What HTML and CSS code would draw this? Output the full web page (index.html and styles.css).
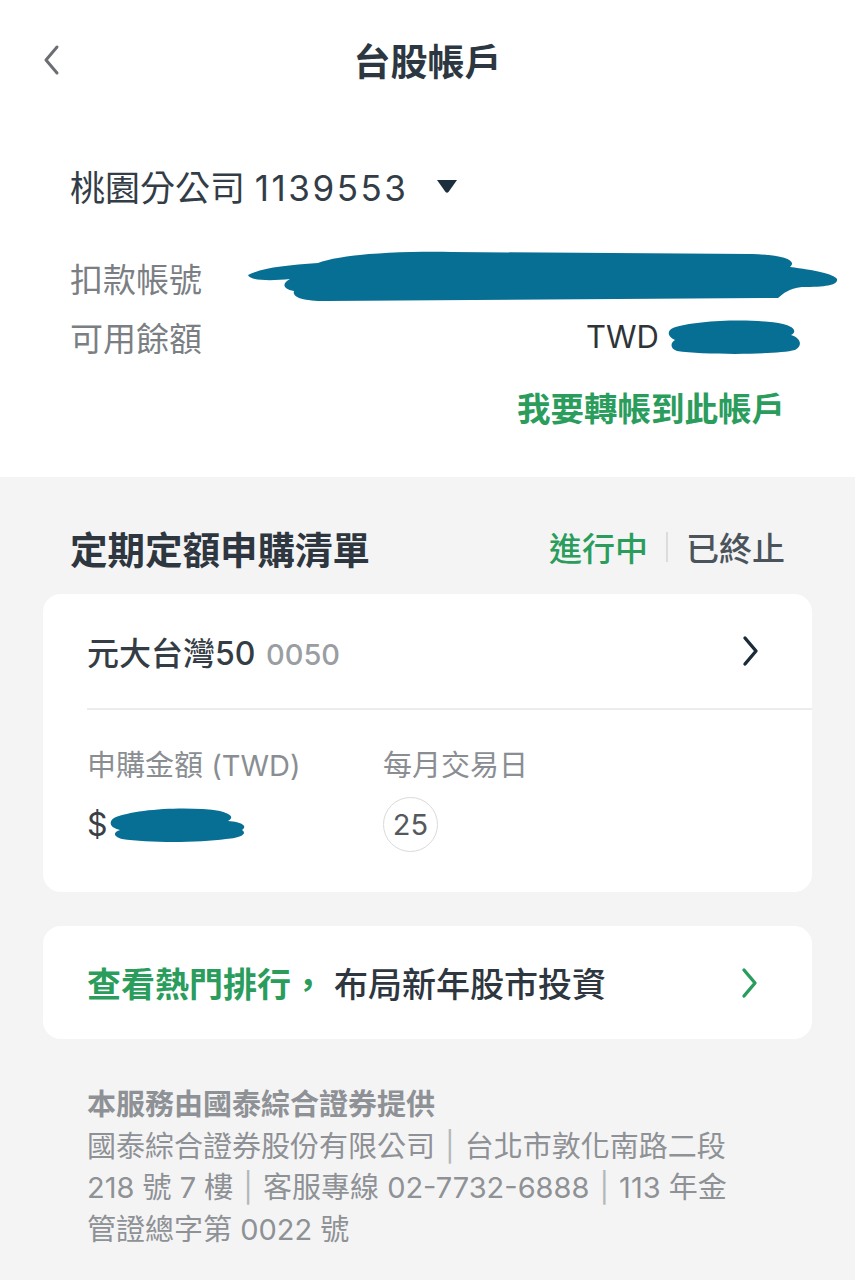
FILE: index.html
```html
<!DOCTYPE html>
<html lang="zh-Hant">
<head>
    <meta charset="UTF-8">
    <meta name="viewport" content="width=device-width, initial-scale=1.0">
    <title>台股帳戶</title>
    <link rel="stylesheet" href="styles.css">
</head>
<body>
    <header class="topbar">
        <a class="back" href="#" aria-label="返回">
            <svg width="20" height="32" viewBox="0 0 20 32"><path d="M15 3 L4 16 L15 29" fill="none" stroke="#6b6e72" stroke-width="3" stroke-linecap="round" stroke-linejoin="round"/></svg>
        </a>
        <h1>台股帳戶</h1>
    </header>

    <section class="account">
        <div class="branch">
            <span>桃園分公司 <span class="branch-no">1139553</span></span>
            <svg class="caret" width="22" height="14" viewBox="0 0 22 14"><path d="M1 1 H21 L12.5 13 Q11 14.5 9.5 13 Z" fill="#1c2f3f"/></svg>
        </div>

        <div class="info-row">
            <span class="label">扣款帳號</span>
            <!-- redaction mark -->
            <svg class="mark mark-account" width="596" height="54" viewBox="0 0 596 54"><path d="M6 27 C20 20 44 17 76 15 C96 7 150 3 210 4 L510 6 C540 7 556 12 548 19 C572 22 592 26 595 31 C596 37 584 39 560 39 C546 41 542 45 536 50 L84 53 C60 53 50 49 52 43 C40 41 40 35 48 31 C30 33 8 33 6 27 Z" fill="#076f93"/></svg>
        </div>
        <div class="info-row">
            <span class="label">可用餘額</span>
            <span class="value">TWD <svg class="mark mark-balance" width="137" height="37" viewBox="0 0 137 37"><path d="M8 10 C30 2 90 0 118 6 C130 9 132 14 126 17 C136 20 138 28 130 32 C110 37 40 37 12 33 C4 30 6 24 10 22 C2 18 2 13 8 10 Z" fill="#076f93"/></svg></span>
        </div>

        <a class="transfer" href="#">我要轉帳到此帳戶</a>
    </section>

    <main class="content">
        <div class="list-head">
            <h2>定期定額申購清單</h2>
            <div class="tabs">
                <span class="tab active">進行中</span>
                <span class="tab-sep"></span>
                <span class="tab">已終止</span>
            </div>
        </div>

        <div class="card">
            <div class="card-row">
                <div class="fund">元大台灣50 <span class="code">0050</span></div>
                <svg width="20" height="32" viewBox="0 0 20 32"><path d="M5 3 L16 16 L5 29" fill="none" stroke="#1b2b3a" stroke-width="3.4" stroke-linecap="round" stroke-linejoin="round"/></svg>
            </div>
            <div class="card-detail">
                <div class="detail-col amount">
                    <div class="label">申購金額 (TWD)</div>
                    <div class="detail-value">$<svg class="mark" width="140" height="37" viewBox="0 0 140 37"><path d="M6 12 C26 3 80 0 112 5 C124 8 126 12 120 15 C134 16 140 20 134 24 C140 28 132 32 118 33 C90 37 40 37 14 33 C4 30 6 26 12 24 C2 22 0 16 6 12 Z" fill="#076f93"/></svg></div>
                </div>
                <div class="detail-col">
                    <div class="label">每月交易日</div>
                    <div class="detail-value"><span class="day">25</span></div>
                </div>
            </div>
        </div>

        <a class="card promo" href="#">
            <span><span class="promo-em">查看熱門排行，</span> 布局新年股市投資</span>
            <svg width="20" height="32" viewBox="0 0 20 32"><path d="M5 3 L16 16 L5 29" fill="none" stroke="#2a9d5c" stroke-width="3.4" stroke-linecap="round" stroke-linejoin="round"/></svg>
        </a>

        <footer class="note">
            <div class="note-title">本服務由國泰綜合證券提供</div>
            <p>國泰綜合證券股份有限公司<span class="bar">|</span>台北市敦化南路二段 218 號 7 樓<span class="bar">|</span>客服專線 02-7732-6888<span class="bar">|</span>113 年金管證總字第 0022 號</p>
        </footer>
    </main>
</body>
</html>
```

FILE: styles.css
```css
body {
    margin: 0;
    padding: 0;
    font-family: Inter, "Noto Sans CJK TC", sans-serif;
    background-color: #f4f4f4;
    color: #2e3842;
}
a {
    text-decoration: none;
}
.topbar {
    height: 120px;
    display: flex;
    align-items: center;
    justify-content: center;
    position: relative;
    background: white;
}
.topbar h1 {
    margin: 0;
    font-size: 37px;
    font-weight: 700;
    color: #2d3741;
}
.back {
    position: absolute;
    left: 42px;
    top: 44px;
    display: flex;
}
.account {
    background: white;
    padding: 40px 70px 43px;
}
.branch {
    display: flex;
    align-items: center;
    gap: 28px;
    height: 50px;
    font-size: 35px;
    color: #333d47;
}
.branch-no {
    letter-spacing: 2.5px;
}
.caret {
    margin-top: 2px;
}
.info-row {
    position: relative;
    display: flex;
    justify-content: space-between;
    align-items: center;
    height: 59px;
    font-size: 33px;
}
.branch + .info-row {
    margin-top: 38px;
}
.label {
    color: #7b7f84;
}
.value {
    display: flex;
    align-items: center;
    gap: 6px;
    font-size: 31px;
    color: #2e3438;
    margin-right: -17px;
}
.mark-account {
    position: absolute;
    left: 172px;
    top: 0;
}
.transfer {
    display: block;
    text-align: right;
    margin-top: 18px;
    line-height: 50px;
    font-size: 33.5px;
    font-weight: 700;
    color: #2a9d5c;
}
.content {
    padding: 45px 43px 40px;
}
.list-head {
    display: flex;
    justify-content: space-between;
    align-items: center;
    height: 50px;
    padding: 0 27px;
}
.list-head h2 {
    margin: 0;
    font-size: 37.5px;
    font-weight: 700;
    color: #2e3640;
}
.tabs {
    display: flex;
    align-items: center;
    gap: 18px;
    font-size: 33px;
    font-weight: 500;
    color: #4b535b;
}
.tab.active {
    color: #2a9d5c;
}
.tab-sep {
    width: 2px;
    height: 30px;
    background: #dcdcdc;
}
.card {
    background: white;
    border-radius: 18px;
    margin-top: 22px;
}
.card-row {
    display: flex;
    justify-content: space-between;
    align-items: center;
    height: 116px;
    margin-left: 44px;
    padding-right: 52px;
    border-bottom: 2px solid #ececec;
    box-sizing: border-box;
}
.fund {
    font-size: 32px;
    font-weight: 500;
    color: #343c44;
}
.code {
    margin-left: 2px;
    font-size: 29px;
    color: #9a9ea2;
}
.card-detail {
    display: flex;
    padding: 36px 44px 40px;
}
.detail-col {
    display: flex;
    flex-direction: column;
    gap: 11px;
}
.detail-col.amount {
    width: 296px;
}
.detail-col .label {
    font-size: 29px;
    line-height: 40px;
    color: #8a8e92;
}
.detail-value {
    display: flex;
    align-items: center;
    height: 55px;
    font-size: 32px;
    color: #3a4046;
}
.day {
    display: flex;
    align-items: center;
    justify-content: center;
    width: 55px;
    height: 55px;
    border: 1.5px solid #dadada;
    border-radius: 50%;
    box-sizing: border-box;
    font-size: 29px;
    color: #55595d;
}
.promo {
    display: flex;
    justify-content: space-between;
    align-items: center;
    height: 113px;
    margin-top: 34px;
    padding: 0 53px 0 44px;
    font-size: 34px;
    font-weight: 500;
    color: #2e3640;
}
.promo-em {
    color: #2a9d5c;
    font-weight: 700;
}
.note {
    padding: 45px 70px 0 44px;
    font-size: 29px;
    line-height: 41.5px;
    color: #8e9195;
}
.note-title {
    font-weight: 700;
}
.note p {
    margin: 0;
}
.bar {
    margin: 0 10px;
    color: #b5b8bb;
}
```
